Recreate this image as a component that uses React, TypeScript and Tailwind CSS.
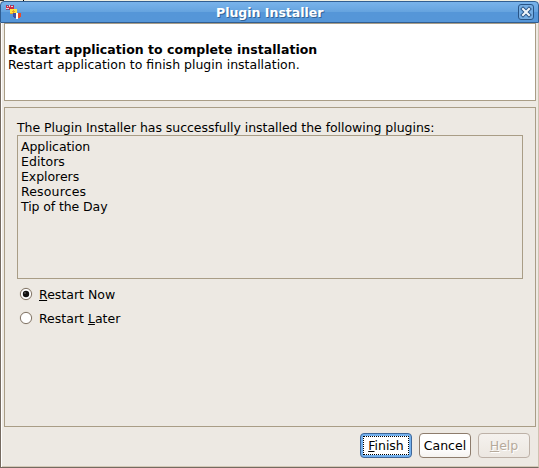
import type { ReactNode } from 'react';

const plugins = [
  { name: 'Application', style: 'tracking-[-0.06px]' },
  { name: 'Editors', style: 'tracking-[0.06px]' },
  { name: 'Explorers', style: 'tracking-[-0.05px]' },
  { name: 'Resources', style: 'tracking-[0.15px]' },
  { name: 'Tip of the Day', style: 'tracking-[-0.1px]' },
];

function PluginIcon() {
  return (
    <svg className="ml-[5px] mt-[3px] h-4 w-4 shrink-0" viewBox="0 0 16 16" shapeRendering="crispEdges">
      <path fill="#c92f49" d="M0 0h8v5H0z" />
      <path fill="#52659d" d="M1 0h2v1H1zM5 0h2v1H5zM1 4h2v1H1z" />
      <path fill="#f0cbd4" d="M3 0h1v2H3zM5 1h2v1H5zM0 3h3v1H0zM1 1h1v1H1z" />
      <path fill="#ffe640" d="M4 4h7v5H4z" />
      <path fill="#e7a12b" d="M7 5h1v3H7zM6 6h3v1H6zM4 8h7v1H4z" />
      <path fill="#4050a5" d="M7 8h3v5H8v-1H7z" />
      <path fill="#fff" d="M10 8h2v6h-2z" />
      <path fill="#ed4b27" d="M12 8h3v4h-1v1h-2z" />
    </svg>
  );
}

function Radio({ checked, children }: { checked?: boolean; children: ReactNode }) {
  return (
    <label className="flex h-6 items-center">
      <svg className="mr-[6px] h-[14px] w-[14px]" viewBox="0 0 14 14">
        <circle cx="7" cy="7" r="6.5" fill="#ddd7cc" />
        <circle cx="7" cy="7" r="5.6" fill="#fff" stroke="#85786b" />
        {checked && <><circle cx="7" cy="7" r="3.2" fill="#111" /><circle cx="6" cy="6" r=".8" fill="#777" /></>}
      </svg>
      <span>{children}</span>
    </label>
  );
}

export default function App() {
  return (
    <div className="flex h-[468px] w-[539px] flex-col overflow-hidden bg-[#ede9e3] text-[12.5px] leading-[15px] text-black [font-family:'DejaVu_Sans',sans-serif]">
      <div className="flex h-px shrink-0 bg-[#eeeee2]">
        <span className="w-1 bg-[#343434]" />
        <span className="ml-[19px] w-px bg-black" />
      </div>
      <header className="flex h-[22px] shrink-0 rounded-t-[4px] border border-[#315e91] bg-linear-to-b from-[#79b3eb] via-[#66a4df] via-48% to-[#5596d8] to-52%">
        <PluginIcon />
        <h1 className="ml-[194px] mt-[3px] whitespace-nowrap font-bold text-white [text-shadow:1px_1px_#346496]">Plugin Installer</h1>
        <button aria-label="Close" className="ml-auto mr-[4px] mt-[2px] h-4 w-4 shrink-0">
          <svg viewBox="0 0 16 16" className="h-4 w-4">
            <rect x=".5" y=".5" width="15" height="15" rx="2.5" fill="#74ace2" stroke="#285486" />
            <path d="m5 5 6 6m0-6-6 6" stroke="#285486" strokeWidth="4" strokeLinecap="square" />
            <path d="m5 5 6 6m0-6-6 6" stroke="#eff5fb" strokeWidth="2.1" strokeLinecap="square" />
          </svg>
        </button>
      </header>
      <div className="flex min-h-0 flex-1 flex-col border-x border-b border-b-[#756a60] border-l-[#756a60] border-r-[#cfc2b1] pl-[3px] pr-[2px] shadow-[inset_1px_0_#fff,inset_0_-1px_#d3c9b8]">
        <section className="h-[78px] shrink-0 border border-[#a99d86] bg-white px-[3px] pt-[18px]">
          <h2 className="whitespace-nowrap font-bold tracking-[0.04px]">Restart application to complete installation</h2>
          <p className="whitespace-nowrap">Restart application to finish plugin installation.</p>
        </section>
        <main className="mt-[6px] h-[320px] shrink-0 border border-[#a99d86] px-3 pt-[12px]">
          <p className="whitespace-nowrap tracking-[-0.045px]">The Plugin Installer has successfully installed the following plugins:</p>
          <ul className="h-[144px] border border-[#a99d86] px-[3px] pt-[3px]">
            {plugins.map((p) => <li key={p.name} className={p.style}>{p.name}</li>)}
          </ul>
          <div className="ml-[2px] mt-[3px]">
            <Radio checked><u>R</u>estart Now</Radio>
            <Radio>Restart <u>L</u>ater</Radio>
          </div>
        </main>
        <footer className="mr-[6px] mt-[6px] flex justify-end gap-[7px]">
          <button className="h-[25px] w-[52px] rounded-[4px] border border-[#3f6798] bg-[#75b2ef] p-[2px]"><span className="flex h-full items-center justify-center border border-dotted border-black bg-white"><span><u>F</u>inish</span></span></button>
          <button className="h-[25px] w-[52px] rounded-[4px] border border-[#8d7c6c] bg-linear-to-b from-white from-60% to-[#f5f3f0]">Cancel</button>
          <button disabled className="h-[25px] w-[52px] rounded-[4px] border border-[#bdb1a7] bg-linear-to-b from-[#f5f2ee] to-[#ece7e1] text-[#b6aa9b] [text-shadow:1px_1px_#fff]"><u>H</u>elp</button>
        </footer>
      </div>
    </div>
  );
}
